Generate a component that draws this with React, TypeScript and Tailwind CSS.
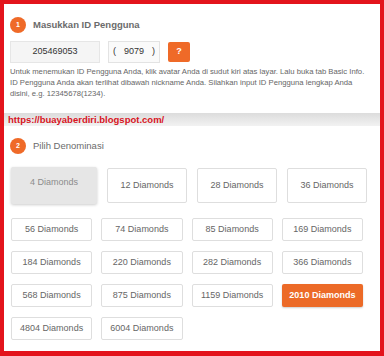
const topRow = ['12 Diamonds', '28 Diamonds', '36 Diamonds']

const grid = [
  '56 Diamonds',
  '74 Diamonds',
  '85 Diamonds',
  '169 Diamonds',
  '184 Diamonds',
  '220 Diamonds',
  '282 Diamonds',
  '366 Diamonds',
  '568 Diamonds',
  '875 Diamonds',
  '1159 Diamonds',
  '2010 Diamonds',
  '4804 Diamonds',
  '6004 Diamonds',
]

function StepBadge({ n }: { n: number }) {
  return (
    <span className="w-[16px] h-[16px] rounded-full bg-[#ef6a28] text-white text-[7px] font-bold flex items-center justify-center">
      {n}
    </span>
  )
}

export default function App() {
  return (
    <div className="w-[384px] h-[356px] border-[4px] border-b-[5px] border-[#e3141c] bg-[#ececec] flex flex-col font-['Liberation_Sans',Arial,sans-serif] overflow-hidden">
      <section className="h-[109px] bg-white pl-[6px] pt-[13px] shadow-[0_1px_2px_rgba(0,0,0,0.12)]">
        <div className="h-[16px] flex items-center gap-[7px]">
          <StepBadge n={1} />
          <span className="text-[9.5px] font-semibold text-[#6b6b6b]">Masukkan ID Pengguna</span>
        </div>

        <div className="mt-[8px] flex items-center gap-[8px]">
          <div className="w-[90px] h-[22px] bg-[#f5f5f5] border border-[#e6e6e6] flex items-center justify-center text-[9px] text-[#333]">
            205469053
          </div>
          <div className="w-[52px] h-[22px] bg-[#fafafa] border border-[#e3e3e3] flex items-center justify-between px-[4px] text-[9px] text-[#333]">
            <span>(</span>
            <span>9079</span>
            <span>)</span>
          </div>
          <button className="w-[22px] h-[20px] rounded-[2px] bg-[#ef6a28] text-white text-[9px] font-bold">?</button>
        </div>

        <p className="mt-[3px] text-[7.7px] leading-[11px] text-[#666]">
          Untuk menemukan ID Pengguna Anda, klik avatar Anda di sudut kiri atas layar. Lalu buka tab Basic Info.
          <br />
          ID Pengguna Anda akan terlihat dibawah nickname Anda. Silahkan input ID Pengguna lengkap Anda
          <br />
          disini, e.g. 12345678(1234).
        </p>
      </section>

      <div className="h-[13px] bg-gradient-to-b from-[#dcdcdc] to-[#f2f2f2] pl-[4px] flex items-center">
        <span className="text-[9.5px] font-bold text-[#d8141e] leading-none">https://buayaberdiri.blogspot.com/</span>
      </div>

      <section className="flex-1 bg-white pl-[7px] pt-[12px]">
        <div className="h-[16px] flex items-center gap-[7px] ml-[-1px]">
          <StepBadge n={2} />
          <span className="text-[9.5px] text-[#6b6b6b]">Pilih Denominasi</span>
        </div>

        <div className="mt-[13px] flex items-center gap-[10px] text-[9px]">
          <div className="w-[86px] h-[37px] rounded-[2px] bg-[#e6e6e6] shadow-[0_1px_3px_rgba(0,0,0,0.2)] text-[#8c8c8c] text-center pt-[9px]">
            4 Diamonds
          </div>
          {topRow.map((d) => (
            <div
              key={d}
              className="w-[80px] h-[35px] rounded-[2px] border border-[#dedede] bg-white text-[#666] flex items-center justify-center"
            >
              {d}
            </div>
          ))}
        </div>

        <div className="mt-[14px] w-[352px] grid grid-cols-4 gap-x-[9px] gap-y-[10px] text-[9px]">
          {grid.map((d) =>
            d === '2010 Diamonds' ? (
              <div
                key={d}
                className="h-[23px] rounded-[2px] bg-[#ec6a27] text-white font-bold flex items-center justify-center shadow-[0_1px_2px_rgba(0,0,0,0.2)]"
              >
                {d}
              </div>
            ) : (
              <div
                key={d}
                className="h-[23px] rounded-[2px] border border-[#dedede] bg-white text-[#666] flex items-center justify-center"
              >
                {d}
              </div>
            )
          )}
        </div>
      </section>
    </div>
  )
}
